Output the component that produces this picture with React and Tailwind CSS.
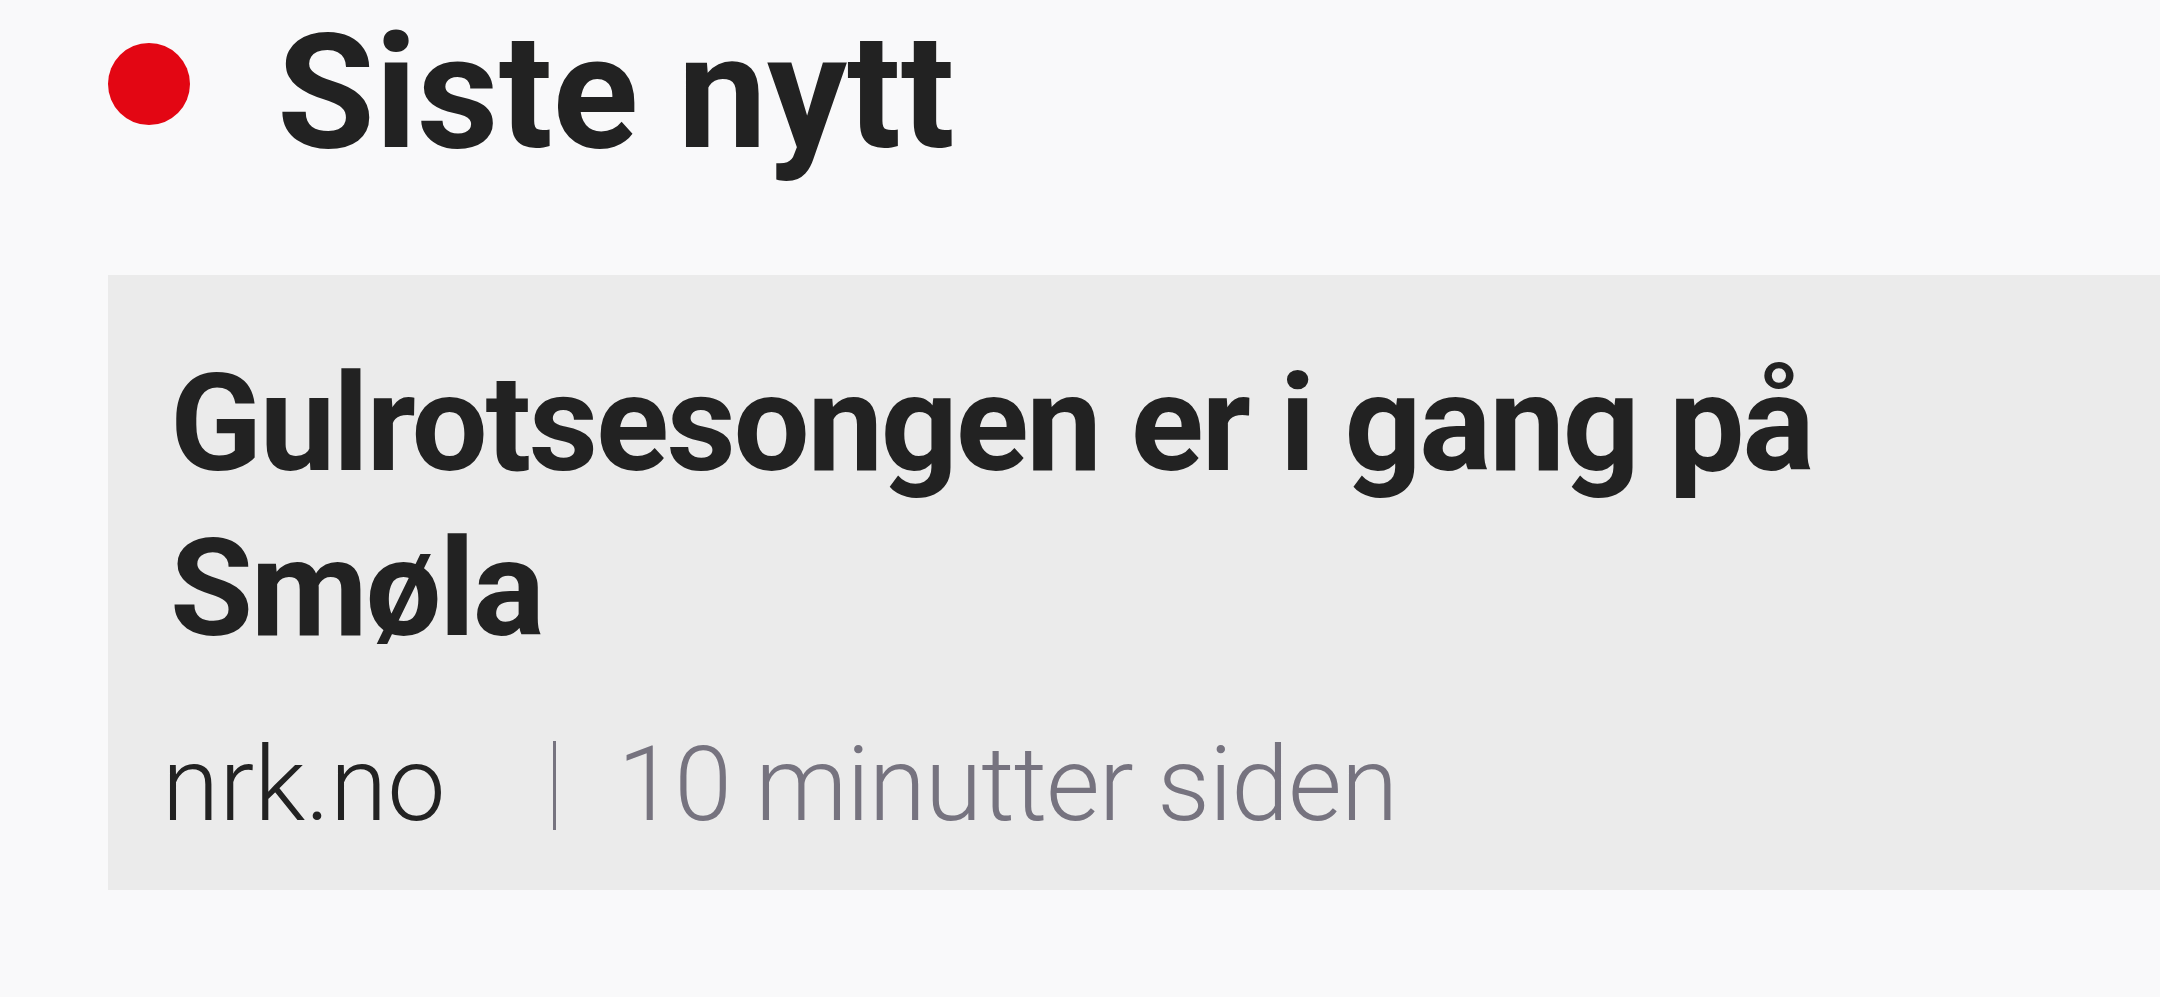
import React from 'react';

const sans = { fontFamily: 'Roboto, "Liberation Sans", sans-serif' };

function App() {
  return (
    <div className="min-h-screen w-full bg-[#f9f9fa] pl-[108px] pt-[8px] overflow-hidden" style={sans}>
      {/* header */}
      <div className="flex items-start">
        <span className="mt-[35px] h-[82px] w-[82px] shrink-0 rounded-full bg-[#e30613]" />
        <h1 className="ml-[87px] text-[159px] font-bold leading-[170px] text-[#222222]">Siste nytt</h1>
      </div>

      {/* latest item */}
      <div className="mt-[97px] bg-[#ebebeb] pl-[62px] pr-[40px] pt-[67px] pb-[44px]">
        <h2 className="text-[135px] font-bold leading-[165px] tracking-[-2.3px] text-[#222222]">
          Gulrotsesongen er i gang på Smøla
        </h2>
        <div className="mt-[52px] -ml-[8px] flex items-center text-[104px] font-light leading-[122px]">
          <span className="text-[#222222]">nrk.no</span>
          <span className="ml-[107px] h-[89px] w-[3px] bg-[#76737f]" />
          <span className="ml-[62px] tracking-[-1px] text-[#76737f]">10 minutter siden</span>
        </div>
      </div>
    </div>
  );
}

export default App;
